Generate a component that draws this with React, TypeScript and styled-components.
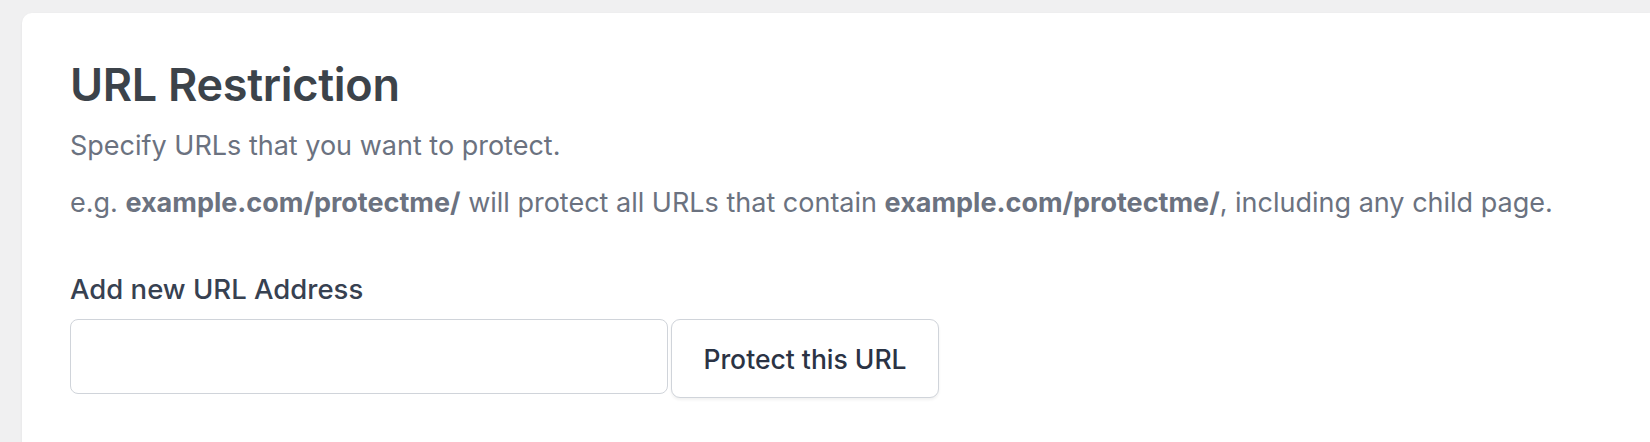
import styled, { createGlobalStyle } from "styled-components";

const GlobalStyle = createGlobalStyle`
  html, body {
    margin: 0;
    padding: 0;
    background: #f0f0f1;
  }
  body {
    font-family: Inter, "Noto Sans", "Liberation Sans", sans-serif;
  }
`;

const Page = styled.div`
  padding: 13px 0 0 22px;
  height: 442px;
  box-sizing: border-box;
  overflow: hidden;
`;

const Card = styled.section`
  background: #fff;
  border-radius: 10px 0 0 0;
  box-shadow: 0 1px 3px rgba(0, 0, 0, 0.06);
  padding: 44px 48px 48px 48px;
  min-height: 500px;
`;

const Title = styled.h1`
  margin: 0 0 14px;
  font-size: 45px;
  line-height: 56px;
  font-weight: 600;
  color: #3c434a;
  letter-spacing: -0.3px;
`;

const Description = styled.p`
  margin: 0;
  font-size: 27px;
  line-height: 38px;
  color: #6b7280;
  font-weight: 400;

  & + & {
    margin-top: 19px;
  }

  strong {
    font-weight: 700;
  }
`;

const Field = styled.div`
  margin-top: 50px;
  display: flex;
  flex-direction: column;
  gap: 13px;
`;

const Label = styled.label`
  font-size: 27.5px;
  line-height: 34px;
  font-weight: 500;
  color: #374151;
`;

const Row = styled.div`
  display: flex;
  align-items: flex-start;
  gap: 3px;
`;

const Input = styled.input`
  width: 598px;
  height: 75px;
  box-sizing: border-box;
  border: 1.5px solid #d0d4da;
  border-radius: 8px;
  background: #fff;
  font: inherit;
  font-size: 24px;
  padding: 0 16px;
  outline: none;
`;

const Button = styled.button`
  height: 79px;
  width: 268px;
  box-sizing: border-box;
  border: 1.5px solid #d0d4da;
  border-radius: 9px;
  background: #fff;
  box-shadow: 0 2px 3px rgba(0, 0, 0, 0.06);
  font-family: inherit;
  font-size: 26.5px;
  font-weight: 500;
  color: #2b3344;
  cursor: pointer;
`;

export default function App() {
  return (
    <>
      <GlobalStyle />
      <Page>
        <Card>
          <Title>URL Restriction</Title>
          <Description>Specify URLs that you want to protect.</Description>
          <Description>
            e.g. <strong>example.com/protectme/</strong> will protect all URLs that contain{" "}
            <strong>example.com/protectme/</strong>, including any child page.
          </Description>
          <Field>
            <Label htmlFor="url">Add new URL Address</Label>
            <Row>
              <Input id="url" type="text" />
              <Button type="button">Protect this URL</Button>
            </Row>
          </Field>
        </Card>
      </Page>
    </>
  );
}
